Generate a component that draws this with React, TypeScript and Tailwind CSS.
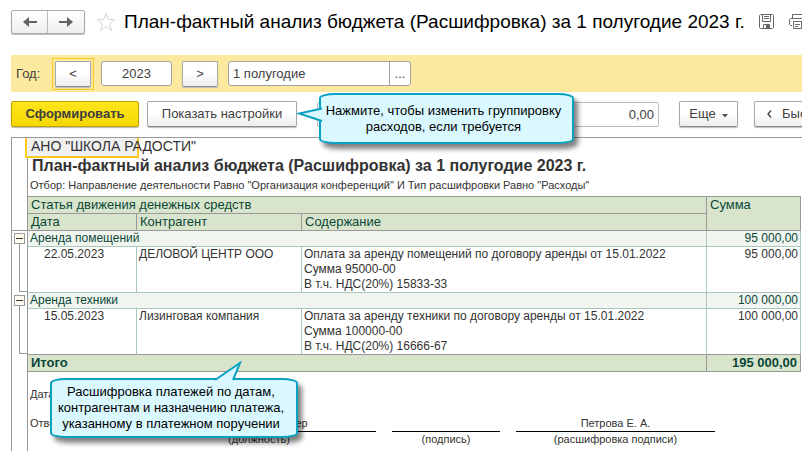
import clsx from "clsx";
import { ReactNode } from "react";

type Payment = {
  article: string;
  total: string;
  date: string;
  partner: string;
  details: string[];
  sum: string;
};

const payments: Payment[] = [
  {
    article: "Аренда помещений",
    total: "95 000,00",
    date: "22.05.2023",
    partner: "ДЕЛОВОЙ ЦЕНТР ООО",
    details: [
      "Оплата за аренду помещений по договору аренды от 15.01.2022",
      "Сумма 95000-00",
      "В т.ч. НДС(20%) 15833-33",
    ],
    sum: "95 000,00",
  },
  {
    article: "Аренда техники",
    total: "100 000,00",
    date: "15.05.2023",
    partner: "Лизинговая компания",
    details: [
      "Оплата за аренду техники по договору аренды от 15.01.2022",
      "Сумма 100000-00",
      "В т.ч. НДС(20%) 16666-67",
    ],
    sum: "100 000,00",
  },
];

const ArrowIcon = ({ flip }: { flip?: boolean }) => (
  <svg
    viewBox="0 0 14 10"
    className={clsx("w-3.5 h-2.5", flip && "-scale-x-100")}
    aria-hidden="true"
  >
    <path d="M0 5 L6 0 V4 H14 V6 H6 V10 Z" fill="#636363" />
  </svg>
);

const StarIcon = () => (
  <svg viewBox="0 0 20 20" className="w-5 h-5" aria-hidden="true">
    <path
      d="M10 1.5 L12.3 7.6 L18.7 7.9 L13.7 12 L15.5 18.4 L10 14.7 L4.5 18.4 L6.3 12 L1.3 7.9 L7.7 7.6 Z"
      fill="none"
      stroke="#d4d4d4"
    />
  </svg>
);

const SaveIcon = () => (
  <svg
    viewBox="0 0 15 15"
    className="w-[15px] h-[15px]"
    fill="none"
    stroke="#666"
    aria-hidden="true"
  >
    <path d="M1.5 0.5 H13.5 L14.5 1.5 V13.5 L13.5 14.5 H1.5 L0.5 13.5 V1.5 Z" />
    <path d="M3.5 0.5 V7.5 H11.5 V0.5 M5 2.5 H10 M5 4.5 H10" />
    <path d="M4.5 14.5 V10.5 H10.5 V14.5" />
    <path d="M7 11 H10 V14 H7 Z" fill="#666" stroke="none" />
  </svg>
);

const PrintIcon = () => (
  <svg
    viewBox="0 0 17 15"
    className="w-[17px] h-[15px]"
    fill="none"
    stroke="#666"
    aria-hidden="true"
  >
    <path d="M3.5 4 V0.5 H13.5 V4" />
    <path d="M3 11.5 H1.5 L0.5 10.5 V5.5 L1.5 4.5 H15.5 L16.5 5.5 V10.5 L15.5 11.5 H14" />
    <path d="M4.5 7.5 H12.5 V14.5 H4.5 Z M6 10.5 H11 M6 12.5 H9" />
  </svg>
);

const Button = ({
  children,
  className,
}: {
  children: ReactNode;
  className?: string;
}) => (
  <button
    type="button"
    className={clsx(
      "flex items-center justify-center shrink-0 h-[26px] rounded-[2px] border border-[#a8a8a8] border-b-[#8c8c8c] bg-linear-to-b from-white from-50% to-[#ececec] shadow-[0_1px_1px_#bbb] whitespace-nowrap",
      className
    )}
  >
    {children}
  </button>
);

const bubble =
  "absolute z-10 pr-1.5 border-2 border-[#0aa2c2] bg-[#d9f8ff] rounded-[16px/5px] shadow-[4px_5px_5px_rgba(0,0,0,0.5)] text-center text-black text-[13px] leading-4 whitespace-nowrap";

const App: React.FC = () => {
  return (
    <div className="min-h-screen flex flex-col overflow-hidden bg-white text-[#404040] text-[13px] font-['Liberation_Sans',Arial,sans-serif]">
      <header className="flex items-center h-[25px] mt-[9px] mb-[21px] pl-[11px]">
        <nav className="flex shrink-0 rounded-[2px] border border-[#aaa] bg-linear-to-b from-white to-[#eee] shadow-[0_1px_1px_#bbb]">
          <button
            type="button"
            aria-label="Назад"
            className="flex items-center justify-center w-9 h-[22px] border-r border-[#bbb]"
          >
            <ArrowIcon />
          </button>
          <button
            type="button"
            aria-label="Вперед"
            className="flex items-center justify-center w-9 h-[22px]"
          >
            <ArrowIcon flip />
          </button>
        </nav>
        <button type="button" aria-label="Избранное" className="shrink-0 ml-[11px]">
          <StarIcon />
        </button>
        <h1 className="flex-1 ml-2 text-[19px] leading-6 text-black whitespace-nowrap">
          План-фактный анализ бюджета (Расшифровка) за 1 полугодие 2023 г.
        </h1>
        <div className="flex gap-[15px] shrink-0 -mr-1">
          <button type="button" aria-label="Сохранить">
            <SaveIcon />
          </button>
          <button type="button" aria-label="Печать">
            <PrintIcon />
          </button>
        </div>
      </header>

      <section className="flex items-center h-[37px] ml-[11px] pl-[5px] bg-[#fce9a0]">
        <label htmlFor="year" className="w-9">
          Год:
        </label>
        <div className="border border-[#fcc922] p-[2px] mr-[7px]">
          <Button className="w-9">&lt;</Button>
        </div>
        <input
          id="year"
          defaultValue="2023"
          className="w-[71px] h-[25px] mr-2.5 rounded-[3px] border border-[#a0a0a0] bg-white text-center"
        />
        <Button className="w-9 mr-2.5">&gt;</Button>
        <div className="flex h-[25px] rounded-[3px] border border-[#a0a0a0] bg-white">
          <input
            aria-label="Период"
            defaultValue="1 полугодие"
            className="w-[160px] px-1"
          />
          <button
            type="button"
            aria-label="Выбрать период"
            className="w-[21px] border-l border-[#a0a0a0]"
          >
            ...
          </button>
        </div>
      </section>

      <section className="flex items-center h-[26px] mt-[9px] mb-2.5 ml-[11px]">
        <button
          type="button"
          className="w-32 h-[26px] mr-2 shrink-0 rounded-[2px] border border-[#c0a000] bg-linear-to-b from-[#ffe61a] to-[#f5d800] shadow-[0_1px_1px_#bbb] font-bold"
        >
          Сформировать
        </button>
        <div className="relative mr-5">
          <Button className="w-[150px]">Показать настройки</Button>
          <div
            className={clsx(bubble, "left-[172px] -top-2 w-[255px] h-[51px] pt-2")}
          >
            <svg
              viewBox="0 0 27 16"
              className="absolute -left-[25px] top-3 w-[27px] h-4"
              aria-hidden="true"
            >
              <path
                d="M26 1.5 L3 6.5 L26 14"
                fill="#d9f8ff"
                stroke="#0aa2c2"
                strokeWidth="2"
              />
            </svg>
            Нажмите, чтобы изменить группировку
            <br />
            расходов, если требуется
          </div>
        </div>
        <input
          aria-label="Сумма"
          defaultValue="0,00"
          className="w-[342px] h-[25px] mr-5 px-1 shrink-0 rounded-[2px] border border-[#bbb] text-right"
        />
        <Button className="w-[59px] mr-4 gap-1.5">
          Еще
          <svg viewBox="0 0 6 4" className="w-1.5 h-1 mt-1" aria-hidden="true">
            <path d="M0 0 H6 L3 3.5 Z" fill="#555" />
          </svg>
        </Button>
        <Button className="px-3 gap-2.5">
          <svg viewBox="0 0 5 8" className="w-[5px] h-2" aria-hidden="true">
            <path d="M4 0.5 L1 4 L4 7.5" fill="none" stroke="#444" strokeWidth="1.4" />
          </svg>
          Быстрый отбор
        </Button>
      </section>

      <main className="flex-1 flex flex-col ml-[11px] border-t border-l border-[#999] text-[#333]">
        <div className="relative h-[58px] ml-[15px] border-l border-[#999] whitespace-nowrap">
          <div className="absolute -left-[3px] top-0 w-[114px] h-5 border-x-2 border-b-2 border-[#fcc922] bg-[#f0f0f0]" />
          <div className="relative pl-[3px] text-[14px] leading-[17px] font-medium">
            АНО "ШКОЛА РАДОСТИ"
          </div>
          <h2 className="relative pl-1 text-[16px] leading-[22px] font-bold">
            План-фактный анализ бюджета (Расшифровка) за 1 полугодие 2023 г.
          </h2>
          <p className="pl-0.5 text-[11px] leading-4">
            Отбор: Направление деятельности Равно "Организация конференций" И
            Тип расшифровки Равно "Расходы"
          </p>
        </div>

        <div className="pr-px">
          <table className="w-full table-fixed border-separate border-spacing-0 text-[12px] leading-[15px]">
            <colgroup>
              <col className="w-4" />
              <col className="w-[109px]" />
              <col className="w-[165px]" />
              <col />
              <col className="w-[94px]" />
            </colgroup>
            <thead className="text-left text-[13px] leading-4 text-[#0b4738]">
              <tr className="h-[18px]">
                <td
                  rowSpan={2}
                  className="p-0 border-r border-b border-[#999]"
                />
                <th
                  colSpan={3}
                  className="p-0 pl-[3px] font-normal border-y border-r border-[#999] bg-[#d8e5cc]"
                >
                  Статья движения денежных средств
                </th>
                <th
                  rowSpan={2}
                  className="p-0 pl-[3px] font-normal align-top border-y border-r border-[#999] bg-[#d8e5cc]"
                >
                  Сумма
                </th>
              </tr>
              <tr className="h-[17px] bg-[#d8e5cc]">
                <th className="p-0 pl-[3px] font-normal border-r border-b border-[#999]">
                  Дата
                </th>
                <th className="p-0 pl-[3px] font-normal border-r border-b border-[#999]">
                  Контрагент
                </th>
                <th className="p-0 pl-[3px] font-normal border-r border-b border-[#999]">
                  Содержание
                </th>
              </tr>
            </thead>
            {payments.map((payment, index) => {
              const last = index === payments.length - 1;
              const edge = last ? "border-b-[#999]" : "border-b-[#a9c8bb]";

              return (
                <tbody key={payment.article}>
                  <tr className="h-4 bg-[#f0f5ef] text-[#0b4738]">
                    <td
                      rowSpan={2}
                      className="p-0 align-top bg-white border-r border-[#999]"
                    >
                      <div className="flex flex-col h-[61px] pt-0.5">
                        <button
                          type="button"
                          aria-label="Свернуть"
                          className="flex items-center justify-center w-[11px] h-[11px] ml-0.5 shrink-0 border border-[#999] bg-[#fffef0]"
                        >
                          <span className="w-[7px] h-px bg-[#333]" />
                        </button>
                        <span className="flex-1 ml-[7px] border-l border-b border-[#999]" />
                      </div>
                    </td>
                    <td
                      colSpan={3}
                      className="p-0 pl-0.5 border-r border-b border-[#a9c8bb]"
                    >
                      {payment.article}
                    </td>
                    <td className="p-0 pr-0.5 text-right border-r border-b border-[#a9c8bb]">
                      {payment.total}
                    </td>
                  </tr>
                  <tr className="h-[46px] align-top">
                    <td
                      className={clsx(
                        "p-0 pl-4 border-r border-b border-r-[#a9c8bb]",
                        edge
                      )}
                    >
                      {payment.date}
                    </td>
                    <td
                      className={clsx(
                        "p-0 pl-0.5 border-r border-b border-r-[#a9c8bb]",
                        edge
                      )}
                    >
                      {payment.partner}
                    </td>
                    <td
                      className={clsx(
                        "p-0 pl-0.5 border-r border-b border-r-[#a9c8bb]",
                        edge
                      )}
                    >
                      {payment.details.map((line) => (
                        <div key={line}>{line}</div>
                      ))}
                    </td>
                    <td
                      className={clsx(
                        "p-0 pr-0.5 text-right border-r border-b border-r-[#a9c8bb]",
                        edge
                      )}
                    >
                      {payment.sum}
                    </td>
                  </tr>
                </tbody>
              );
            })}
            <tfoot className="text-[13px] leading-4 font-bold text-[#0b4738]">
              <tr className="h-[17px]">
                <td className="p-0 border-r border-[#999]" />
                <td
                  colSpan={3}
                  className="p-0 pl-[3px] border-r border-b border-[#999] bg-[#d8e5cc]"
                >
                  Итого
                </td>
                <td className="p-0 pr-[3px] text-right border-r border-b border-[#999] bg-[#d8e5cc]">
                  195 000,00
                </td>
              </tr>
            </tfoot>
          </table>
        </div>

        <footer className="relative flex-1 ml-[15px] pt-[15px] pl-0.5 border-l border-[#999] text-[11px] leading-[15px]">
          <div>Дата</div>
          <div className="flex gap-4 mt-3.5">
            <div className="w-24">Ответственный</div>
            <div className="w-[234px] text-center">
              <div className="border-b border-black">Главный бухгалтер</div>
              <div>(должность)</div>
            </div>
            <div className="w-[108px] text-center">
              <div className="h-4 border-b border-black" />
              <div>(подпись)</div>
            </div>
            <div className="w-[199px] text-center">
              <div className="border-b border-black">Петрова Е. А.</div>
              <div>(расшифровка подписи)</div>
            </div>
          </div>
          <div
            className={clsx(bubble, "left-[22px] top-1.5 w-[248px] h-[60px] pt-1")}
          >
            <svg
              viewBox="0 0 30 20"
              className="absolute left-[162px] -top-[19px] w-[30px] h-5"
              aria-hidden="true"
            >
              <path
                d="M1 19 L26 2 L19 19"
                fill="#d9f8ff"
                stroke="#0aa2c2"
                strokeWidth="2"
              />
            </svg>
            Расшифровка платежей по датам,
            <br />
            контрагентам и назначению платежа,
            <br />
            указанному в платежном поручении
          </div>
        </footer>
      </main>
    </div>
  );
};

export default App;
